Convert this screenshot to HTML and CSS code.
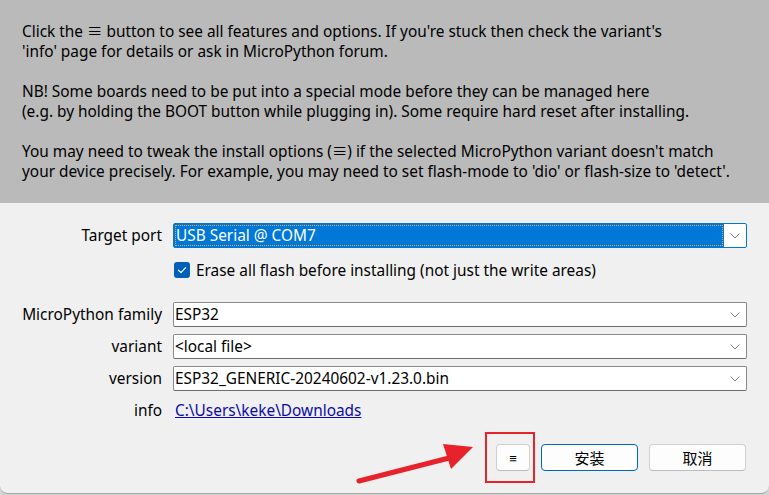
FILE: index.html
```html
<!DOCTYPE html>
<html>
<head>
<meta charset="utf-8">
<link rel="stylesheet" href="styles.css">
</head>
<body>
<div class="window">
  <div class="intro">
    <p>Click the ≡ button to see all features and options. If you're stuck then check the variant's<br>'info' page for details or ask in MicroPython forum.</p>
    <p>NB! Some boards need to be put into a special mode before they can be managed here<br>(e.g. by holding the BOOT button while plugging in). Some require hard reset after installing.</p>
    <p>You may need to tweak the install options (≡) if the selected MicroPython variant doesn't match<br>your device precisely. For example, you may need to set flash-mode to 'dio' or flash-size to 'detect'.</p>
  </div>
  <div class="form">
    <div class="row">
      <div class="label">Target port</div>
      <div class="combo combo-active">
        <div class="value-active"><span>USB Serial @ COM7</span></div>
        <div class="arrow"><svg width="10" height="6" viewBox="0 0 10 6"><path d="M0.5 0.5 L5 5 L9.5 0.5" fill="none" stroke="#707070" stroke-width="0.9"/></svg></div>
      </div>
    </div>
    <div class="row row-check">
      <div class="label"></div>
      <div class="check">
        <span class="box"><svg width="16" height="16" viewBox="0 0 16 16"><path d="M4.5 8.2 L7 10.6 L11.6 5.6" fill="none" stroke="#fff" stroke-width="1.2" stroke-linecap="round" stroke-linejoin="round"/></svg></span>
        <span>Erase all flash before installing (not just the write areas)</span>
      </div>
    </div>
    <div class="row row-family">
      <div class="label">MicroPython family</div>
      <div class="combo">
        <div class="value">ESP32</div>
        <div class="arrow"><svg width="10" height="6" viewBox="0 0 10 6"><path d="M0.5 0.5 L5 5 L9.5 0.5" fill="none" stroke="#707070" stroke-width="0.9"/></svg></div>
      </div>
    </div>
    <div class="row row-next">
      <div class="label">variant</div>
      <div class="combo">
        <div class="value">&lt;local file&gt;</div>
        <div class="arrow"><svg width="10" height="6" viewBox="0 0 10 6"><path d="M0.5 0.5 L5 5 L9.5 0.5" fill="none" stroke="#707070" stroke-width="0.9"/></svg></div>
      </div>
    </div>
    <div class="row row-next">
      <div class="label">version</div>
      <div class="combo">
        <div class="value">ESP32_GENERIC-20240602-v1.23.0.bin</div>
        <div class="arrow"><svg width="10" height="6" viewBox="0 0 10 6"><path d="M0.5 0.5 L5 5 L9.5 0.5" fill="none" stroke="#707070" stroke-width="0.9"/></svg></div>
      </div>
    </div>
    <div class="row row-info">
      <div class="label">info</div>
      <div class="info"><a class="link" href="#">C:\Users\keke\Downloads</a></div>
    </div>
    <div class="buttons">
      <button class="btn btn-menu">≡</button>
      <button class="btn btn-wide btn-default">安装</button>
      <button class="btn btn-wide">取消</button>
      <div class="highlight"></div>
      <svg class="arrow-mark" width="130" height="50" viewBox="0 0 130 50">
        <line x1="4" y1="40" x2="98" y2="16" stroke="#e8222a" stroke-width="5" stroke-linecap="round"/>
        <polygon points="118,6 88,3 96,28" fill="#e8222a"/>
      </svg>
    </div>
  </div>
</div>
</body>
</html>
```

FILE: styles.css
```css
html, body {
  margin: 0;
  padding: 0;
  background: #d4d4d4;
}
.window {
  width: 769px;
  height: 494px;
  box-sizing: border-box;
  background: #f0f0f0;
  border-bottom: 1px solid #a8a8a8;
  border-radius: 0 0 8px 8px;
  overflow: hidden;
  font-family: "Noto Sans", "Noto Sans CJK SC", sans-serif;
  font-size: 15.4px;
  color: #000;
}
.intro {
  background: #bababa;
  padding: 22px 22px 1px 22px;
  height: 203px;
  box-sizing: border-box;
}
.intro p {
  margin: 0 0 20px 0;
  line-height: 20px;
  white-space: nowrap;
}
.form {
  padding: 20px 22px 0 22px;
  display: flex;
  flex-direction: column;
}
.row {
  display: flex;
  align-items: center;
  gap: 11px;
}
.label {
  width: 140px;
  flex: none;
  text-align: right;
  white-space: nowrap;
}
.combo {
  flex: 1;
  height: 25px;
  box-sizing: border-box;
  border: 1px solid #8a8a8a;
  border-bottom-color: #6e6e6e;
  border-radius: 2px;
  background: #fff;
  display: flex;
  align-items: stretch;
}
.combo .value {
  flex: 1;
  padding-left: 1px;
  display: flex;
  align-items: center;
  white-space: nowrap;
}
.combo .arrow {
  width: 22px;
  display: flex;
  align-items: center;
  justify-content: center;
  flex: none;
}
.combo-active {
  border-color: #0078d7;
}
.value-active {
  flex: 1;
  background: #0078d7;
  color: #fff;
  padding: 1px;
  display: flex;
}
.value-active span {
  flex: 1;
  border: 1px dotted #f3a53a;
  display: flex;
  align-items: center;
  padding-left: 0;
}
.row-check {
  margin-top: 10px;
  height: 24px;
}
.check {
  display: flex;
  align-items: center;
  gap: 6px;
  padding-left: 1px;
  white-space: nowrap;
}
.box {
  width: 16px;
  height: 16px;
  background: #005fb8;
  border-radius: 3px;
  display: flex;
}
.row-family {
  margin-top: 20px;
}
.row-next {
  margin-top: 7px;
}
.row-info {
  margin-top: 7px;
  height: 24px;
}
.info {
  padding-left: 2px;
}
.link {
  color: #0b0ba8;
  text-decoration: underline;
}
.buttons {
  margin-top: 22px;
  display: flex;
  justify-content: flex-end;
  gap: 11px;
  padding-right: 1px;
  position: relative;
}
.btn {
  height: 27px;
  box-sizing: border-box;
  border: 1px solid #d0d0d0;
  border-bottom-color: #bcbcbc;
  border-radius: 4px;
  background: #fdfdfd;
  font-family: "Noto Sans CJK SC", "Noto Sans", sans-serif;
  font-size: 15px;
  color: #000;
  padding: 0;
}
.btn-menu {
  width: 34px;
  font-family: "Noto Sans", sans-serif;
  font-size: 13px;
}
.btn-wide {
  width: 97px;
}
.btn-default {
  border: 1px solid #0067c0;
}
.highlight {
  position: absolute;
  left: 463px;
  top: -12px;
  width: 50px;
  height: 51px;
  box-sizing: border-box;
  border: 2px solid #e8222a;
}
.arrow-mark {
  position: absolute;
  left: 333px;
  top: -3px;
}
```
